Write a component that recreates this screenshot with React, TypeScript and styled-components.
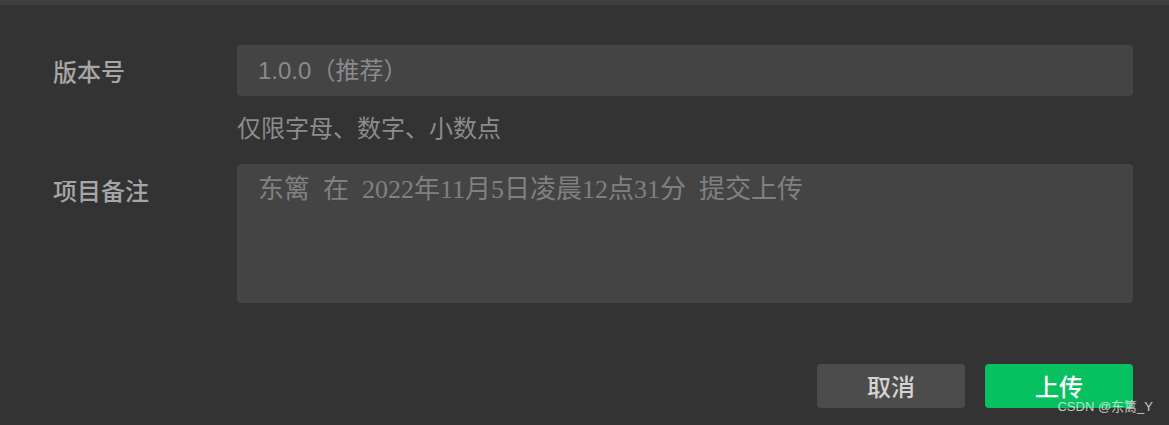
import React from "react";
import styled, { createGlobalStyle } from "styled-components";

const GlobalStyle = createGlobalStyle`
  html, body {
    margin: 0;
    padding: 0;
    background: #333333;
    overflow: hidden;
  }
  * { box-sizing: border-box; }
`;

const Page = styled.div`
  position: relative;
  width: 1169px;
  height: 425px;
  background: #333333;
  font-family: "Liberation Sans", "Noto Sans CJK SC", sans-serif;
`;

const TopBar = styled.div`
  height: 5px;
  background: #3e3e3e;
`;

const Form = styled.div`
  padding: 40px 36px 0 53px;
  display: flex;
  flex-direction: column;
`;

const Row = styled.div<{ $top?: boolean; $gap?: number }>`
  display: grid;
  grid-template-columns: 184px 1fr;
  align-items: ${(p) => (p.$top ? "start" : "center")};
  margin-top: ${(p) => p.$gap ?? 0}px;
`;

const Label = styled.label<{ $pad?: number }>`
  font-family: "Noto Sans CJK SC", sans-serif;
  font-size: 24px;
  line-height: 32px;
  font-weight: 500;
  color: #a6a6a6;
  padding-top: ${(p) => p.$pad ?? 0}px;
`;

const TextInput = styled.input`
  height: 51px;
  width: 100%;
  border: none;
  outline: none;
  border-radius: 4px;
  background: #444444;
  padding: 0 21px;
  font-family: "Liberation Sans", "Noto Sans CJK SC", sans-serif;
  font-size: 24px;
  color: #8a8a8a;
  &::placeholder { color: #8a8a8a; }
`;

const Hint = styled.div`
  margin: 15px 0 0 184px;
  font-family: "Noto Sans CJK SC", sans-serif;
  font-size: 24px;
  line-height: 32px;
  color: #8c8c8c;
`;

const NoteArea = styled.textarea`
  height: 139px;
  width: 100%;
  border: none;
  outline: none;
  resize: none;
  border-radius: 4px;
  background: #444444;
  padding: 10px 21px;
  font-family: "Liberation Serif", "Noto Sans CJK SC", serif;
  font-size: 26px;
  line-height: 32px;
  word-spacing: 0.25em;
  color: #808080;
  &::placeholder {
    color: #808080;
    word-spacing: 0.25em;
  }
`;

const Actions = styled.div`
  margin-top: 61px;
  display: flex;
  justify-content: flex-end;
  gap: 20px;
`;

const Button = styled.button<{ $primary?: boolean }>`
  width: 148px;
  height: 44px;
  border: none;
  border-radius: 4px;
  background: ${(p) => (p.$primary ? "#07c160" : "#4c4c4c")};
  color: ${(p) => (p.$primary ? "#ffffff" : "#d4d4d4")};
  font-family: "Noto Sans CJK SC", sans-serif;
  font-size: 24px;
  font-weight: 500;
  line-height: 44px;
  padding: 0;
  cursor: pointer;
`;

const Watermark = styled.div`
  position: absolute;
  right: 16px;
  bottom: 10px;
  font-family: "Liberation Sans", "Noto Sans CJK SC", sans-serif;
  font-size: 13px;
  line-height: 16px;
  color: rgba(235, 235, 235, 0.8);
  pointer-events: none;
`;

export default function App() {
  return (
    <Page>
      <GlobalStyle />
      <TopBar />
      <Form>
        <Row>
          <Label>版本号</Label>
          <TextInput placeholder="1.0.0（推荐）" />
        </Row>
        <Hint>仅限字母、数字、小数点</Hint>
        <Row $top $gap={21}>
          <Label $pad={10}>项目备注</Label>
          <NoteArea placeholder="东篱 在 2022年11月5日凌晨12点31分 提交上传" />
        </Row>
        <Actions>
          <Button>取消</Button>
          <Button $primary>上传</Button>
        </Actions>
      </Form>
      <Watermark>CSDN @东篱_Y</Watermark>
    </Page>
  );
}
